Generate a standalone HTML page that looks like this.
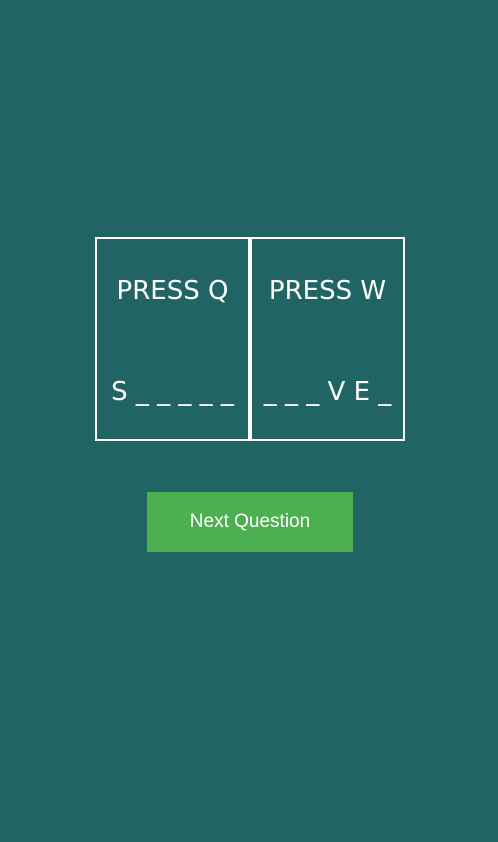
<!DOCTYPE html>
<html><head><style>
html,body{margin:0;padding:0;width:498px;height:842px;background:#206563;overflow:hidden;font-family:"Liberation Sans",sans-serif;}
.box{position:absolute;top:237px;width:151px;height:200px;border:2px solid #fff;color:#fff;text-align:center;font-family:"DejaVu Sans","Liberation Sans",sans-serif;}
.t{position:absolute;left:0;right:0;top:37px;font-size:26px;}
.b{position:absolute;left:0;right:0;top:138px;font-size:26px;white-space:pre;}
.btn{position:absolute;left:147px;top:492px;width:206px;height:60px;background:#4caf50;color:#fff;font-size:19px;line-height:60px;text-align:center;}
</style></head><body>
<div class="box" style="left:95px"><div class="t">PRESS Q</div><div class="b">S _ _ _ _ _</div></div>
<div class="box" style="left:250px"><div class="t">PRESS W</div><div class="b">_ _ _ V E _</div></div>
<div class="btn">Next Question</div>
</body></html>
